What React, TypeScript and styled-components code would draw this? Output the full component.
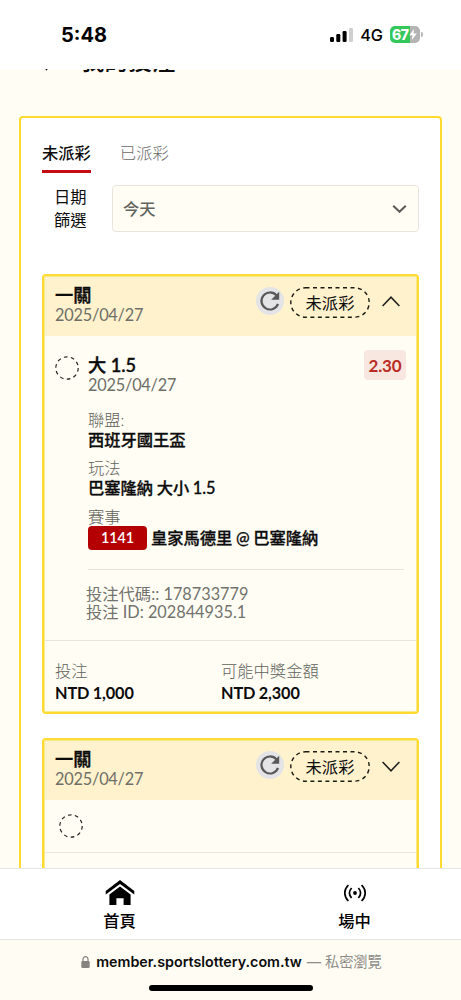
import React from 'react';
import styled, { createGlobalStyle } from 'styled-components';

const yellow = '#ffda31';
const cream = '#fffdf4';
const line = '#e8e5de';

const Global = createGlobalStyle`
  *, *::before, *::after { box-sizing: border-box; }
  body {
    margin: 0;
    background: ${cream};
    color: #0c0c0c;
    font-family: Lato, "Noto Sans CJK TC", sans-serif;
    font-size: 16.3px;
  }
`;

const Screen = styled.div`
  display: flex;
  flex-direction: column;
  width: 461px;
  height: 1000px;
  overflow: hidden;
`;

const StatusBar = styled.header`
  display: flex;
  align-items: center;
  justify-content: space-between;
  flex: none;
  height: 69px;
  padding: 0 38px 0 61px;
  background: #fff;
  font-family: Inter, sans-serif;
  color: #000;
`;

const Clock = styled.span`
  font-size: 20px;
  font-weight: 700;
  line-height: 24px;
`;

const StatusIcons = styled.div`
  display: flex;
  align-items: center;
`;

const Network = styled.span`
  margin: 0 7px 0 6px;
  font-size: 16.3px;
  font-weight: 500;
  line-height: 22px;
`;

const Battery = styled.div`
  display: flex;
  align-items: center;
  gap: 1px;
`;

const BatteryBody = styled.div`
  display: flex;
  align-items: center;
  width: 30px;
  height: 17px;
  padding-left: 2px;
  border-radius: 5px;
  background: linear-gradient(90deg, #34c759 67%, #b4b4b4 67%);
  color: #fff;
  font-size: 14px;
  font-weight: 800;
  line-height: 17px;
  letter-spacing: -0.4px;
`;

const BatteryTip = styled.div`
  width: 2px;
  height: 5px;
  border-radius: 0 2px 2px 0;
  background: #b4b4b4;
`;

const Page = styled.main`
  flex: none;
  height: 799px;
  padding: 0 19px;
  overflow: hidden;
`;

const TitleRow = styled.div`
  display: flex;
  align-items: center;
  gap: 28px;
  height: 36px;
  margin-top: -26px;
  padding-left: 22px;
`;

const Title = styled.h1`
  margin: 0;
  font-size: 23.6px;
  font-weight: 500;
  line-height: 36px;
`;

const Panel = styled.section`
  height: 900px;
  margin-top: 37px;
  padding: 21px 21px 0;
  border: 2px solid ${yellow};
  border-radius: 4px;
  background: #fff;
`;

const Tabs = styled.nav`
  display: flex;
  gap: 29px;
`;

const Tab = styled.span<{ $active?: boolean }>`
  height: 34px;
  border-bottom: 3px solid ${p => (p.$active ? '#c40d12' : 'transparent')};
  color: ${p => (p.$active ? '#0c0c0c' : '#6a6a6a')};
  font-weight: ${p => (p.$active ? 500 : 300)};
  line-height: 27px;
`;

const Filter = styled.div`
  display: flex;
  align-items: center;
  justify-content: space-between;
  height: 47px;
  margin-top: 12px;
`;

const FilterLabel = styled.label`
  width: 34px;
  margin: -1px 0 0 12px;
  line-height: 23.5px;
`;

const Select = styled.div`
  display: flex;
  align-items: center;
  justify-content: space-between;
  width: 307px;
  height: 47px;
  padding: 0 11px 1px 10px;
  border: 1px solid ${line};
  border-radius: 4px;
  background: ${cream};
  color: #64645f;
  font-weight: 500;
`;

const Card = styled.article`
  width: 377px;
  border: 2px solid ${yellow};
  border-radius: 4px;
  background: ${cream};
  box-shadow: inset 0 0 0 1px #ffe98a;
  padding: 1px;
  overflow: hidden;
`;

const CardList = styled.div`
  display: flex;
  flex-direction: column;
  gap: 24px;
  margin-top: 42px;
`;

const CardHeader = styled.div`
  display: flex;
  align-items: flex-start;
  height: 59px;
  padding: 8px 16px 0 10px;
  background: #fff2cc;
`;

const HeaderText = styled.div`
  flex: 1;
`;

const Strong = styled.div`
  color: #0c0c0c;
  font-size: 18.2px;
  font-weight: 500;
  line-height: 21px;
  -webkit-text-stroke: 0.4px currentColor;
`;

const DateText = styled.div`
  color: #6f6f68;
  letter-spacing: -0.2px;
  line-height: 18px;
`;

const Refresh = styled.span`
  display: flex;
  width: 28px;
  height: 28px;
  margin-top: 2px;
  border-radius: 50%;
  background: #e4e4e6;
`;

const Status = styled.span`
  display: flex;
  align-items: center;
  justify-content: center;
  position: relative;
  width: 80px;
  height: 31px;
  margin: 2px 12px 0 6px;
  padding-bottom: 1px;
`;

const StatusOutline = styled.svg`
  position: absolute;
  inset: 0;
`;

const Chevron = styled.svg<{ $down?: boolean }>`
  display: block;
  margin-top: 11px;
  transform: ${p => (p.$down ? 'translateY(1px) rotate(180deg)' : 'none')};
`;

const Bet = styled.div`
  display: flex;
  align-items: flex-start;
  height: 304px;
  padding: 15px 10px 0;
`;

const BetMarker = styled.div`
  margin-top: 5px;
`;

const BetInfo = styled.div`
  flex: 1;
  margin: 4px 0 0 9px;
`;

const BetTop = styled.div`
  display: flex;
  justify-content: space-between;
  height: 55px;
`;

const Odds = styled.span`
  width: 42px;
  height: 30px;
  margin-top: -5px;
  border-radius: 4px;
  background: #f8e7e0;
  color: #b92c25;
  font-size: 17px;
  font-weight: 700;
  letter-spacing: -0.1px;
  line-height: 32px;
  text-align: center;
`;

const Field = styled.div`
  height: 48.3px;
`;

const Caption = styled.div`
  color: #62625c;
  font-weight: 300;
  line-height: 19px;
`;

const Value = styled.div`
  display: flex;
  align-items: center;
  gap: 4px;
  font-weight: 500;
  line-height: 21px;
  letter-spacing: -0.03px;
  white-space: pre;
  word-spacing: -0.4px;
  -webkit-text-stroke: 0.3px currentColor;
`;

const Amount = styled(Value)`
  margin-top: 2px;
  font-weight: 700;
  letter-spacing: -0.12px;
  -webkit-text-stroke: 0;
`;

const MatchCode = styled.span`
  width: 59px;
  height: 24px;
  border-radius: 4px;
  background: #b50003;
  color: #fff;
  font-size: 14.3px;
  font-weight: 600;
  line-height: 24px;
  text-align: center;
  -webkit-text-stroke: 0;
`;

const Codes = styled.div`
  width: 316px;
  margin-top: 14px;
  padding-top: 15px;
  border-top: 1px solid ${line};
  color: #73736e;
  line-height: 18px;
`;

const CodeLine = styled.div`
  margin-left: -2px;
`;

const Totals = styled.div`
  display: flex;
  height: 71px;
  padding: 20px 10px 0;
  border-top: 1px solid ${line};
`;

const Total = styled.div`
  width: 166px;
`;

const Collapsed = styled.div`
  height: 53px;
  padding: 14px;
  border-bottom: 1px solid ${line};
`;

const Blank = styled.div`
  height: 90px;
`;

const BottomNav = styled.nav`
  display: flex;
  flex: none;
  height: 72px;
  padding-left: 2px;
  border-top: 1px solid #e6e6e6;
  border-bottom: 1px solid #e4e4e0;
  background: #fff;
`;

const NavItem = styled.a`
  display: flex;
  flex-direction: column;
  flex: none;
  align-items: center;
  width: 235px;
  padding-top: 9px;
  color: #000;
  font-weight: 500;
  line-height: 24px;
`;

const NavIcon = styled.svg`
  display: block;
  flex: none;
  margin-bottom: 3px;
`;

const Browser = styled.footer`
  display: flex;
  flex-direction: column;
  align-items: center;
  flex: 1;
  background: #fffcf4;
`;

const Address = styled.div`
  display: flex;
  align-items: center;
  height: 22px;
  margin-top: 11px;
  padding-left: 2px;
  font-family: Inter, "Noto Sans CJK TC", sans-serif;
  font-size: 14.3px;
  font-weight: 600;
  line-height: 22px;
  white-space: nowrap;
`;

const Lock = styled.svg`
  margin-right: 6px;
`;

const Private = styled.span`
  margin-left: 5px;
  color: #8e8c88;
  font-weight: 400;
  letter-spacing: -0.1px;
`;

const HomeBar = styled.div`
  width: 164px;
  height: 6px;
  margin-top: 12px;
  border-radius: 3px;
  background: #000;
`;

const Ring = styled.svg`
  display: block;
`;

const DashedCircle = () => (
  <Ring width="24" height="24" viewBox="0 0 24 24" fill="none">
    <circle cx="12" cy="12" r="11.2" stroke="#222" strokeWidth="1.2" strokeDasharray="3.7 3.34" />
  </Ring>
);

const Header = ({ open }: { open: boolean }) => (
  <CardHeader>
    <HeaderText>
      <Strong>一關</Strong>
      <DateText>2025/04/27</DateText>
    </HeaderText>
    <Refresh>
      <svg width="28" height="28" viewBox="0 0 28 28" fill="none">
        <path d="M20.4 8.4A8.5 8.5 0 1 0 22 16.8" stroke="#58585a" strokeWidth="2.2" />
        <path d="M23.2 4.8V12.8H15.2Z" fill="#58585a" />
      </svg>
    </Refresh>
    <Status>
      <StatusOutline width="80" height="31" fill="none">
        <rect x=".8" y=".8" width="78.4" height="29.4" rx="14.7" stroke="#1c1a14" strokeWidth="1.4" strokeDasharray="4 3.5" />
      </StatusOutline>
      未派彩
    </Status>
    <Chevron $down={!open} width="18" height="11" viewBox="0 0 18 11" fill="none">
      <path d="M.6 10 9 1.2 17.4 10" stroke="#222" strokeWidth="1.6" />
    </Chevron>
  </CardHeader>
);

export default function App() {
  return (
    <Screen>
      <Global />
      <StatusBar>
        <Clock>5:48</Clock>
        <StatusIcons>
          <svg width="24" height="14" viewBox="0 0 24 14">
            <rect x="0" y="9" width="4" height="5" rx="1.2" />
            <rect x="6.3" y="6" width="4" height="8" rx="1.2" />
            <rect x="12.6" y="3" width="4" height="11" rx="1.2" />
            <rect x="19" y="0" width="4" height="14" rx="1.2" fill="#cfcfcf" />
          </svg>
          <Network>4G</Network>
          <Battery>
            <BatteryBody>
              67
              <svg width="8" height="11" viewBox="0 0 8 11">
                <path d="M5 0 .4 6.2H3.6L2.8 11 7.8 4.6H4.5Z" fill="#fff" />
              </svg>
            </BatteryBody>
            <BatteryTip />
          </Battery>
        </StatusIcons>
      </StatusBar>

      <Page>
        <TitleRow>
          <svg width="12" height="20" viewBox="0 0 12 20" fill="none">
            <path d="M1 9 5.5 18 9.5 13" stroke="#0c0c0c" strokeWidth="2" />
          </svg>
          <Title>我的投注</Title>
        </TitleRow>
        <Panel>
          <Tabs>
            <Tab $active>未派彩</Tab>
            <Tab>已派彩</Tab>
          </Tabs>
          <Filter>
            <FilterLabel>日期篩選</FilterLabel>
            <Select>
              今天
              <svg width="15" height="9" viewBox="0 0 15 9" fill="none">
                <path d="M1.2 1.7 7.5 7.7 13.8 1.7" stroke="#5a5a56" strokeWidth="2.1" />
              </svg>
            </Select>
          </Filter>
          <CardList>
            <Card>
              <Header open />
              <Bet>
                <BetMarker><DashedCircle /></BetMarker>
                <BetInfo>
                  <BetTop>
                    <div>
                      <Strong>大 1.5</Strong>
                      <DateText>2025/04/27</DateText>
                    </div>
                    <Odds>2.30</Odds>
                  </BetTop>
                  <Field>
                    <Caption>聯盟:</Caption>
                    <Value>西班牙國王盃</Value>
                  </Field>
                  <Field>
                    <Caption>玩法</Caption>
                    <Value>巴塞隆納 大小 1.5</Value>
                  </Field>
                  <Field>
                    <Caption>賽事</Caption>
                    <Value><MatchCode>1141</MatchCode>皇家馬德里 @ 巴塞隆納</Value>
                  </Field>
                  <Codes>
                    <CodeLine>投注代碼:: 178733779</CodeLine>
                    <CodeLine>投注 ID: 202844935.1</CodeLine>
                  </Codes>
                </BetInfo>
              </Bet>
              <Totals>
                <Total>
                  <Caption>投注</Caption>
                  <Amount>NTD 1,000</Amount>
                </Total>
                <Total>
                  <Caption>可能中獎金額</Caption>
                  <Amount>NTD 2,300</Amount>
                </Total>
              </Totals>
            </Card>
            <Card>
              <Header open={false} />
              <Collapsed><DashedCircle /></Collapsed>
              <Blank />
            </Card>
          </CardList>
        </Panel>
      </Page>

      <BottomNav>
        <NavItem>
          <NavIcon width="30" height="28" viewBox="0 0 30 28">
            <path d="M15 2 29.3 13V16.6L15 6 .7 16.6V13Z" />
            <path d="M15 8.4 25.6 16.4V27H18.6V20.2H11.4V27H4.4V16.4Z" />
          </NavIcon>
          首頁
        </NavItem>
        <NavItem>
          <NavIcon width="24" height="28" viewBox="0 0 24 28" fill="none" stroke="#000" strokeWidth="1.7">
            <circle cx="12" cy="15" r="1.9" fill="#000" stroke="none" />
            <path d="M5.4 7C.6 11.8.6 18.2 5.4 23M18.6 7C23.4 11.8 23.4 18.2 18.6 23M8.6 10C5.8 13.2 5.8 16.8 8.6 20M15.4 10C18.2 13.2 18.2 16.8 15.4 20" />
          </NavIcon>
          場中
        </NavItem>
      </BottomNav>

      <Browser>
        <Address>
          <Lock width="9" height="12" viewBox="0 0 9 12" fill="none">
            <path d="M2 6V3.2a2.5 2.5 0 0 1 5 0V6" stroke="#858380" strokeWidth="1.2" />
            <rect x=".3" y="5" width="8.4" height="7" rx="1.3" fill="#858380" />
          </Lock>
          member.sportslottery.com.tw
          <Private>— 私密瀏覽</Private>
        </Address>
        <HomeBar />
      </Browser>
    </Screen>
  );
}
